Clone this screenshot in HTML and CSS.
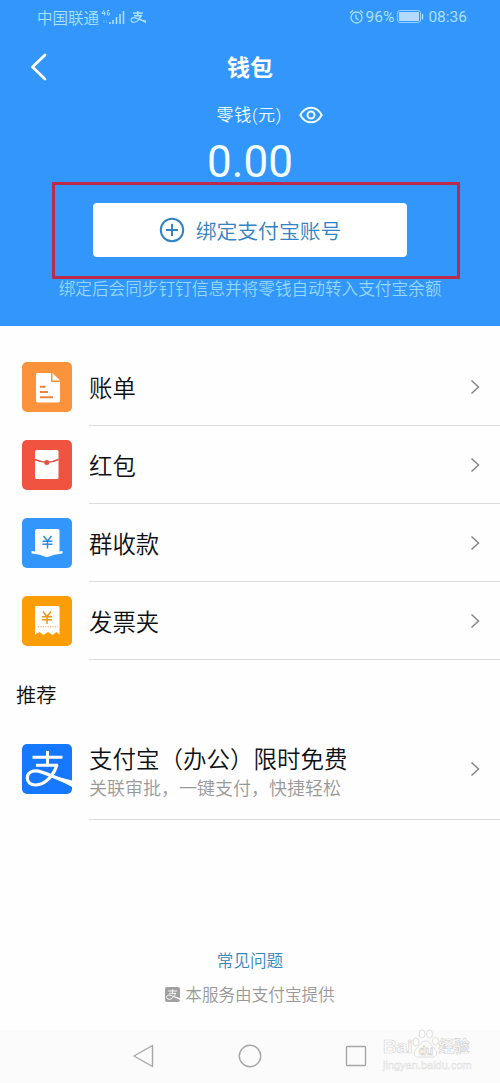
FILE: index.html
```html
<!DOCTYPE html>
<html lang="zh-CN">
<head>
<meta charset="utf-8">
<title>钱包</title>
<link rel="stylesheet" href="styles.css">
</head>
<body>
<svg width="0" height="0" class="defs">
  <symbol id="zhi" viewBox="0 0 50 50">
    <path d="M10.500 13.300H40.500M25.500 7V21M14 21.200H36" fill="none" stroke="currentColor" stroke-width="3"/>
    <path d="M35 20.500C32 31 23.500 41 13.500 41C8.500 41 5.300 38 5.300 34C5.300 29.500 9 26.800 13.500 26.800C22 26.800 33 34.500 50 40" fill="none" stroke="currentColor" stroke-width="3.200"/>
    <path d="M27 30.500L50 36.500V43Z" fill="currentColor"/>
  </symbol>
  <symbol id="chev" viewBox="0 0 10 16"><path d="M1.500 1.500L8.500 8L1.500 14.500" fill="none" stroke="#858585" stroke-width="1.500"/></symbol>
  <symbol id="yen" viewBox="0 0 12 14"><path d="M2 1L6 6L10 1M1 6.200H11M1 9.300H11M6 6V13.500" fill="none" stroke="currentColor" stroke-width="1.500"/></symbol>
</svg>
<div class="screen">
  <header class="hero">
    <div class="status">
      <span class="carrier">中国联通</span>
      <svg class="signal" width="25" height="16" viewBox="0 0 25 16">
        <path d="M3 1L1 4.500H4.500M3.700 2.500V6.500M8.500 1.500H6.500V6H8.500V4H7.500" fill="none" stroke="currentColor"/>
        <path d="M3 11V14M5.500 11V14" stroke="currentColor" opacity=".3"/>
        <path d="M9 13V15M12 11V15M15.500 8V15M19 5V15M22.500 2V15" stroke="currentColor" stroke-width="1.600"/>
      </svg>
      <svg class="mini-zhi" width="16" height="16" viewBox="2 2 48 46" stroke="currentColor"><use href="#zhi" width="50" height="50"/><path d="M11 13.300H40M25.500 7V21M14 21.200H36L27 34" fill="none" stroke-width="4"/></svg>
      <span class="status-right">
        <svg width="15" height="16" viewBox="0 0 15 16" fill="none" stroke="currentColor" stroke-width="1.300"><circle cx="7.500" cy="8.500" r="5.500"/><path d="M1 4L4 1.500M11 1.500L14 4M7 5.500V9L9.500 11"/></svg>
        <span class="pct">96%</span>
        <svg class="battery" width="27" height="14" viewBox="0 0 27 14"><rect x=".5" y=".5" width="23" height="12" rx="2.500" fill="none" stroke="currentColor" stroke-width=".8"/><rect x="2" y="2" width="20" height="9" fill="#b5d9ff"/><path d="M25.500 4V9.500" stroke="currentColor" stroke-width="1.500"/></svg>
        <span>08:36</span>
      </span>
    </div>
    <div class="title-row">
      <svg class="back" width="18" height="28" viewBox="0 0 18 28"><path d="M15 2L2.500 14L15 26" fill="none" stroke="#fff" stroke-width="2.800" stroke-linecap="round" stroke-linejoin="round"/></svg>
      <h1 class="title">钱包</h1>
    </div>
    <div class="label-row">
      <span class="label">零钱(元)</span>
      <svg width="24" height="18" viewBox="0 0 24 18" fill="none" stroke="currentColor" stroke-width="2"><path d="M1.300 9C6.500-.8 17.500-.8 22.700 9C17.500 18.800 6.500 18.800 1.300 9Z"/><circle cx="12" cy="9" r="3.500"/></svg>
    </div>
    <div class="amount">0.00</div>
    <div class="highlight">
      <div class="bind">
        <svg width="26" height="26" viewBox="0 0 26 26" fill="none" stroke="currentColor" stroke-width="2"><circle cx="13" cy="13" r="11.200"/><path d="M13 7V19M7 13H19"/></svg>
        <span>绑定支付宝账号</span>
      </div>
    </div>
    <p class="hint">绑定后会同步钉钉信息并将零钱自动转入支付宝余额</p>
  </header>

  <main class="list">
    <div class="row">
      <svg class="icon" viewBox="0 0 50 50"><rect width="50" height="50" rx="5" fill="#fb923c"/><path d="M15.500 11H29V20H38V38.500Q38 40.500 36 40.500H16Q14 40.500 14 38.500V12.500Q14 11 15.500 11Z" fill="#fff"/><path d="M30.500 11L38 18.500H30.500Z" fill="#fff"/><path d="M18 24.800H23.500M18 30H26M18 35.300H31" stroke="#e9853b" stroke-width="2"/></svg>
      <div class="cell"><span class="name">账单</span><svg class="chev"><use href="#chev"/></svg></div>
    </div>
    <div class="row">
      <svg class="icon" viewBox="0 0 50 50"><rect width="50" height="50" rx="5" fill="#f05340"/><rect x="13" y="10" width="23.500" height="29" rx="1.500" fill="#fff"/><path d="M13 19.500Q25 25 36.500 19.500" fill="none" stroke="#e4513f" stroke-width="1.500"/><circle cx="24.800" cy="22.500" r="2.500" fill="#e4513f"/></svg>
      <div class="cell"><span class="name">红包</span><svg class="chev"><use href="#chev"/></svg></div>
    </div>
    <div class="row">
      <svg class="icon" viewBox="0 0 50 50"><rect width="50" height="50" rx="5" fill="#3296fa"/><path d="M15 11H36Q37.500 11 37.500 12.500V33.500L40.500 33V35.500Q32 36 25 39.200Q18 36 9.500 35.500V33L13 33.500V12.500Q13 11 15 11Z" fill="#fff"/><svg x="19.500" y="17" width="12" height="14" color="#3189df"><use href="#yen"/></svg></svg>
      <div class="cell"><span class="name">群收款</span><svg class="chev"><use href="#chev"/></svg></div>
    </div>
    <div class="row">
      <svg class="icon" viewBox="0 0 50 50"><rect width="50" height="50" rx="5" fill="#fb9d07"/><path d="M14.500 10H36Q37.500 10 37.500 11.500V38.500L34.500 36L30.500 39L26 36L21.500 39L17.500 36L13 38.500V11.500Q13 10 14.500 10Z" fill="#fff"/><path d="M16 30.800H36" stroke="#e9a24a" stroke-width="1" stroke-dasharray="1.200 1.200"/><svg x="19" y="14.500" width="12" height="14" color="#ed9615"><use href="#yen"/></svg></svg>
      <div class="cell"><span class="name">发票夹</span><svg class="chev"><use href="#chev"/></svg></div>
    </div>
    <h2 class="section">推荐</h2>
    <div class="row promo">
      <svg class="icon" viewBox="0 0 50 50" color="#fff"><rect width="50" height="50" rx="5" fill="#1677ff"/><use href="#zhi"/></svg>
      <div class="cell">
        <div><div class="name promo-name">支付宝（办公）限时免费</div><div class="desc">关联审批，一键支付，快捷轻松</div></div>
        <svg class="chev"><use href="#chev"/></svg>
      </div>
    </div>
  </main>

  <footer class="foot">
    <div class="faq">常见问题</div>
    <div class="service">
      <svg width="15" height="15" viewBox="0 0 50 50" color="#fff"><rect width="50" height="50" rx="7" fill="#a0a0a0"/><use href="#zhi"/></svg>
      <span>本服务由支付宝提供</span>
    </div>
  </footer>

  <nav class="nav">
    <svg width="24" height="26" viewBox="0 0 24 26"><path d="M20.500 2.500V23.500L2 13Z"/></svg>
    <svg width="24" height="26" viewBox="0 0 24 26"><circle cx="12" cy="13" r="10.700"/></svg>
    <svg width="24" height="26" viewBox="0 0 24 26"><rect x="2.500" y="3.500" width="19" height="19" rx="1"/></svg>
    <div class="watermark">
      <div class="brand"><span class="bai">Bai</span>
        <svg width="27" height="29" viewBox="0 0 27 29"><ellipse cx="4" cy="13" rx="3" ry="4"/><ellipse cx="10" cy="5" rx="3" ry="4"/><ellipse cx="17.500" cy="5" rx="3" ry="4"/><ellipse cx="23.500" cy="12" rx="3" ry="4"/><path d="M13.500 12C18 12 19 17 23 20C27 25 23 29 19 28H8C3 29 0 25 4 20C8 17 9 12 13.500 12Z"/><text x="6.500" y="26" class="du">du</text></svg>
        <span class="jy">经验</span></div>
      <div class="url">jingyan.baidu.com</div>
    </div>
  </nav>
</div>
</body>
</html>
```
FILE: styles.css
```css
* { box-sizing: border-box; }
body { margin: 0; background: #fefefe; font-family: Roboto, "Noto Sans CJK SC", sans-serif; font-weight: 350; color: #111; }
.defs { position: absolute; }
svg { display: block; flex: none; }
.screen { width: 500px; height: 1083px; display: flex; flex-direction: column; }
.hero { height: 326px; background: #3296fa; color: #fff; display: flex; flex-direction: column; align-items: center; flex: none; }
.status { width: 100%; height: 34px; padding: 0 33px 0 37px; display: flex; align-items: center; font-size: 15.500px; color: #a9e2ff; }
.carrier { padding-bottom: 1px; }
.signal { margin-left: 2px; }
.mini-zhi { margin-left: 4px; }
.status-right { margin-left: auto; display: flex; align-items: center; font-weight: 400; }
.pct { margin: 0 3px 0 2px; }
.battery { margin-right: 4px; }
.title-row { width: 100%; height: 66px; display: grid; grid-template-columns: 100px 1fr 100px; align-items: center; }
.back { margin-left: 30px; }
.title { margin: 0; padding-top: 4px; text-align: center; font-size: 23px; font-weight: 700; line-height: 30px; }
.label-row { width: 106px; height: 30px; margin-left: 39px; display: flex; align-items: center; justify-content: space-between; font-size: 17px; color: #f0ffff; white-space: nowrap; }
.label { padding-bottom: 3px; letter-spacing: .7px; }
.amount { height: 52px; line-height: 65px; font-size: 44px; font-weight: 400; color: #f4ffff; }
.highlight { width: 408px; height: 97px; border: 3px solid #bd2b4b; margin-left: 12px; padding: 18px 50px 0 38px; flex: none; }
.bind { height: 54px; background: #fff; border-radius: 4px; display: flex; align-items: center; justify-content: center; gap: 11px; color: #3282c4; font-size: 20.800px; }
.hint { margin: 0; line-height: 21px; font-size: 16.650px; color: #94d8ff; white-space: nowrap; }
.list { padding-top: 22px; }
.row { height: 78px; display: flex; padding-left: 22px; }
.icon { width: 50px; height: 50px; margin: 14px 17px 0 0; }
.cell { flex: 1; display: flex; align-items: center; justify-content: space-between; border-bottom: 1px solid #dcdcdc; padding-right: 20px; }
.chev { width: 10px; height: 16px; }
.name { font-size: 23.400px; line-height: 32px; color: #0d1014; padding-top: 4px; }
.section { margin: 0; padding: 20px 0 0 16px; height: 66px; font-size: 20.300px; line-height: 32px; font-weight: 350; }
.promo { height: 94px; }
.promo .icon { margin-top: 18px; }
.promo .cell { padding-bottom: 7px; }
.promo-name { font-size: 23.500px; padding-top: 7px; }
.desc { font-size: 18px; line-height: 26px; color: #999; }
.foot { margin-top: auto; height: 81px; display: flex; flex-direction: column; align-items: center; font-size: 16.600px; flex: none; }
.faq { color: #3486bd; line-height: 26px; }
.service { display: flex; align-items: center; gap: 5px; line-height: 26px; margin-top: 8px; color: #999; }
.service svg { margin-top: -4px; }
.nav { position: relative; height: 53px; padding-bottom: 2px; flex: none; background: #fbfbfb; display: flex; align-items: center; justify-content: center; gap: 82px; }
.nav > svg { fill: none; stroke: #a6a6a6; stroke-width: 1.400; stroke-linejoin: round; }
.watermark { position: absolute; left: 383px; top: -1px; color: #fff; -webkit-text-stroke: .7px #d5d5d5; }
.brand { display: flex; align-items: flex-end; font: 700 19px/22px "Liberation Sans", "Noto Sans CJK SC", sans-serif; }
.brand svg { fill: #fff; stroke: #d5d5d5; stroke-width: .8; margin-left: -1px; }
.du { font: 700 12px "Liberation Sans", sans-serif; }
.jy { font-size: 15.500px; }
.url { margin-top: 1px; font: 400 11px/12px "Liberation Sans", sans-serif; -webkit-text-stroke: .5px #dedede; }
```
